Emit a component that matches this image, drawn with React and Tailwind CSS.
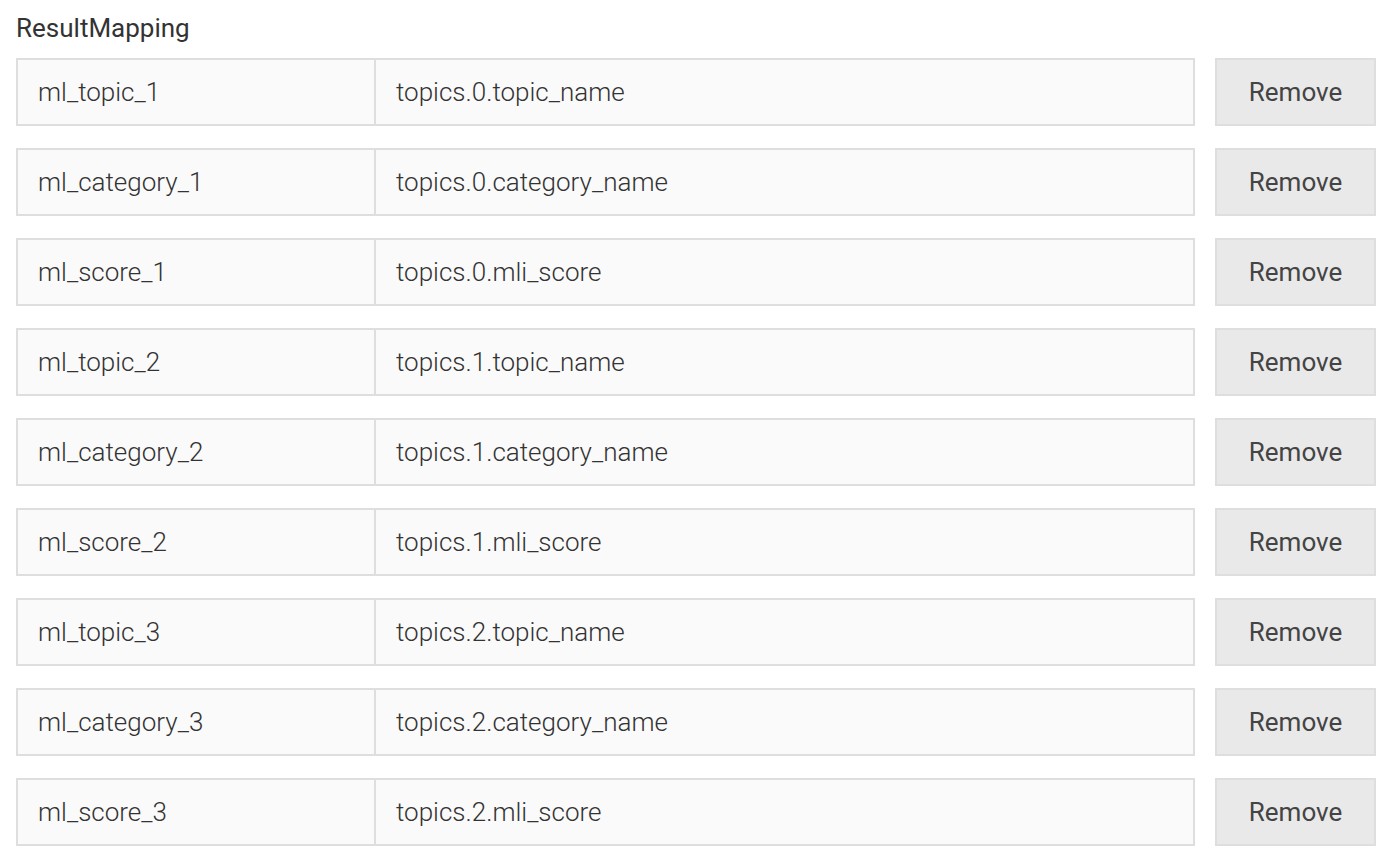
import React from 'react';

// result mapping rows: ml field -> api path
const ROWS = [
  ['ml_topic_1', 'topics.0.topic_name'],
  ['ml_category_1', 'topics.0.category_name'],
  ['ml_score_1', 'topics.0.mli_score'],
  ['ml_topic_2', 'topics.1.topic_name'],
  ['ml_category_2', 'topics.1.category_name'],
  ['ml_score_2', 'topics.1.mli_score'],
  ['ml_topic_3', 'topics.2.topic_name'],
  ['ml_category_3', 'topics.2.category_name'],
  ['ml_score_3', 'topics.2.mli_score'],
];

const MappingRow = ({ field, path }) => (
  <div className="flex gap-[20px] h-[68px]">
    <div className="flex flex-1 border-2 border-[#dedede] bg-[#fafafa] font-light text-[26px] text-[#333]">
      <div className="w-[358px] border-r-2 border-[#dedede] flex items-center pl-[20px] pt-px">{field}</div>
      <div className="flex-1 flex items-center pl-[20px] pt-px">{path}</div>
    </div>
    <button className="w-[161px] border-2 border-[#dedede] bg-[#e9e9e9] text-[#444] text-[26px] flex items-center justify-center">
      Remove
    </button>
  </div>
);

export default function App() {
  return (
    <div className="min-h-screen bg-white pl-4 pr-[18px] pt-[12px] text-[#444] font-['Roboto',_sans-serif]">
      <div className="leading-[32px] mb-[14px] text-[26px] text-[#333]">ResultMapping</div>
      <div className="flex flex-col gap-[22px]">
        {ROWS.map(([field, path]) => (
          <MappingRow key={field} field={field} path={path} />
        ))}
      </div>
    </div>
  );
}
